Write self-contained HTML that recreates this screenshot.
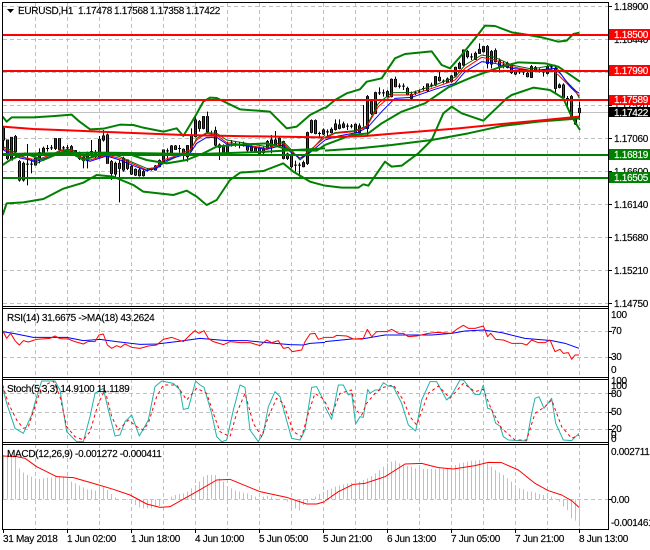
<!DOCTYPE html>
<html>
<head>
<meta charset="utf-8">
<style>
html,body{margin:0;padding:0;background:#fff;width:650px;height:550px;overflow:hidden}
svg{display:block}
text{font-family:"Liberation Sans",sans-serif;font-size:10px;letter-spacing:-.3px;fill:#000;stroke:#000;stroke-width:.15px}
text.w{fill:#fff;stroke:#fff}
polyline{vector-effect:non-scaling-stroke;fill:none;stroke-linejoin:round}
.b{stroke:#008000;stroke-width:2}
.g{stroke:#c0c0c0;stroke-width:1;stroke-dasharray:4 3;fill:none}
</style>
</head>
<body>
<svg width="650" height="550" viewBox="0 0 650 550" xmlns="http://www.w3.org/2000/svg">
<rect width="650" height="550" fill="#fff"/>
<!-- grid verticals -->
<path class="g" d="M35.5 3V306M67.5 3V306M99.5 3V306M131.5 3V306M163.5 3V306M195.5 3V306M227.5 3V306M259.5 3V306M291.5 3V306M323.5 3V306M355.5 3V306M387.5 3V306M419.5 3V306M451.5 3V306M483.5 3V306M515.5 3V306M547.5 3V306M579.5 3V306
M35.5 308V377M67.5 308V377M99.5 308V377M131.5 308V377M163.5 308V377M195.5 308V377M227.5 308V377M259.5 308V377M291.5 308V377M323.5 308V377M355.5 308V377M387.5 308V377M419.5 308V377M451.5 308V377M483.5 308V377M515.5 308V377M547.5 308V377M579.5 308V377
M35.5 379V442M67.5 379V442M99.5 379V442M131.5 379V442M163.5 379V442M195.5 379V442M227.5 379V442M259.5 379V442M291.5 379V442M323.5 379V442M355.5 379V442M387.5 379V442M419.5 379V442M451.5 379V442M483.5 379V442M515.5 379V442M547.5 379V442M579.5 379V442
M35.5 444V529M67.5 444V529M99.5 444V529M131.5 444V529M163.5 444V529M195.5 444V529M227.5 444V529M259.5 444V529M291.5 444V529M323.5 444V529M355.5 444V529M387.5 444V529M419.5 444V529M451.5 444V529M483.5 444V529M515.5 444V529M547.5 444V529M579.5 444V529"/>
<!-- grid horizontals -->
<path class="g" d="M3 6.5H608M3 39.5H608M3 72.5H608M3 105.5H608M3 138.5H608M3 171.5H608M3 204.5H608M3 237.5H608M3 270.5H608M3 303.5H608M3 331.5H608M3 357.5H608M3 393.5H608M3 412.5H608M3 429.5H608M3 499.5H608"/>
<path d="M3 112.5H608" stroke="#c0c0c0" stroke-width="1"/>

<!-- MACD histogram -->
<g transform="translate(0,300) scale(1,.33333)">
<path fill="none" stroke="#c0c0c0" stroke-width="1" d="M3.5 598V465M7.5 598V465M11.5 598V468M15.5 598V468M19.5 598V505M23.5 598V518M27.5 598V525M31.5 598V530M35.5 598V535M39.5 598V537M43.5 598V535M47.5 598V533M51.5 598V533M55.5 598V530M59.5 598V530M63.5 598V530M67.5 598V532M71.5 598V545M75.5 598V550M79.5 598V557M83.5 598V562M87.5 598V568M91.5 598V568M95.5 598V572M99.5 598V565M103.5 598V562M107.5 598V570M111.5 598V582M115.5 598V592M127.5 598V600M131.5 598V605M135.5 598V615M139.5 598V622M143.5 598V625M147.5 598V625M151.5 598V625M155.5 598V620M159.5 598V618M163.5 598V608M167.5 598V600M171.5 598V590M175.5 598V585M179.5 598V582M183.5 598V580M187.5 598V575M191.5 598V565M195.5 598V555M199.5 598V545M203.5 598V530M207.5 598V525M211.5 598V525M215.5 598V525M219.5 598V535M223.5 598V545M227.5 598V560M231.5 598V565M235.5 598V572M239.5 598V575M243.5 598V578M247.5 598V580M251.5 598V585M255.5 598V590M259.5 598V595M263.5 598V590M267.5 598V587M271.5 598V590M275.5 598V595M283.5 598V600M287.5 598V605M291.5 598V620M295.5 598V625M299.5 598V632M303.5 598V615M307.5 598V608M311.5 598V595M315.5 598V590M319.5 598V582M323.5 598V575M327.5 598V570M331.5 598V566M335.5 598V560M339.5 598V556M343.5 598V553M347.5 598V550M351.5 598V548M355.5 598V552M359.5 598V545M363.5 598V540M367.5 598V535M371.5 598V528M375.5 598V520M379.5 598V510M383.5 598V500M387.5 598V490M391.5 598V485M395.5 598V482M399.5 598V490M403.5 598V495M407.5 598V498M411.5 598V500M415.5 598V505M419.5 598V505M423.5 598V507M427.5 598V507M431.5 598V507M435.5 598V507M439.5 598V505M443.5 598V507M447.5 598V505M451.5 598V500M455.5 598V495M459.5 598V490M463.5 598V488M467.5 598V485M471.5 598V482M475.5 598V482M479.5 598V480M483.5 598V482M487.5 598V490M491.5 598V500M495.5 598V510M499.5 598V518M503.5 598V525M507.5 598V535M511.5 598V545M515.5 598V555M519.5 598V565M523.5 598V568M527.5 598V575M531.5 598V575M535.5 598V578M539.5 598V582M543.5 598V585M547.5 598V587M551.5 598V590M555.5 598V595M559.5 598V605M563.5 598V620M567.5 598V630M571.5 598V655M575.5 598V662M579.5 598V680"/>
</g>
<path d="M3 499.5H608" stroke="#c0c0c0" stroke-width="1" stroke-dasharray="4 3"/>

<!-- candles -->
<g transform="scale(1,.33333)" fill="none">
<path stroke="#000" stroke-width="1" d="M3.5 378V450M7.5 420V480M11.5 412V480M15.5 405V470M19.5 480V545M23.5 485V545M27.5 432V556M31.5 478V520M35.5 470V495M39.5 445V490M43.5 440V465M47.5 435V455M51.5 435V450M55.5 416V450M59.5 416V455M63.5 438V460M67.5 435V455M71.5 435V460M75.5 450V470M79.5 455V480M83.5 465V505M87.5 455V505M91.5 420V470M95.5 450V475M99.5 408V475M103.5 390V425M107.5 400V490M111.5 480V540M115.5 485V530M119.5 480V607M123.5 470V515M127.5 478V510M131.5 495V525M135.5 505V528M139.5 505V530M143.5 510V530M147.5 505V515M151.5 503V512M155.5 495V512M159.5 478V502M163.5 448V490M167.5 445V480M171.5 435V460M175.5 435V450M179.5 435V458M183.5 445V480M187.5 435V485M191.5 385V455M195.5 350V412M199.5 360V395M203.5 348V388M207.5 335V398M211.5 392V410M215.5 380V440M219.5 430V480M223.5 433V465M227.5 425V462M231.5 420V440M235.5 425V440M239.5 425V445M243.5 425V440M247.5 430V455M251.5 435V455M255.5 440V458M259.5 440V465M263.5 440V462M267.5 420V447M271.5 405V460M275.5 393V437M279.5 410V440M283.5 422V478M287.5 458V480M291.5 460V505M295.5 482V515M299.5 488V530M303.5 482V502M307.5 395V495M311.5 358V400M315.5 358V403M319.5 395V410M323.5 385V405M327.5 388V410M331.5 382V400M335.5 358V392M339.5 358V388M343.5 365V385M347.5 370V390M351.5 372V385M355.5 370V400M359.5 370V400M363.5 315V380M367.5 285V410M371.5 300V345M375.5 275V342M379.5 262V285M383.5 268V290M387.5 270V292M391.5 235V292M395.5 230V262M399.5 250V265M403.5 250V270M407.5 260V287M411.5 275V298M415.5 272V285M419.5 268V280M423.5 258V272M427.5 250V275M431.5 248V262M435.5 228V258M439.5 215V245M443.5 238V250M447.5 232V250M451.5 225V248M455.5 200V230M459.5 185V208M463.5 148V198M467.5 150V175M471.5 160V180M475.5 155V180M479.5 130V162M483.5 138V158M487.5 135V205M491.5 150V205M495.5 145V188M499.5 175V218M503.5 185V205M507.5 185V205M511.5 190V222M515.5 210V225M519.5 208V222M523.5 208V225M527.5 215V232M531.5 195V234M535.5 198V212M539.5 205V218M543.5 208V230M547.5 195V224M551.5 193V210M555.5 195V280M559.5 250V265M563.5 250V295M567.5 288V320M571.5 285V360M575.5 350V375M579.5 305V360"/>
<path stroke="#000" stroke-width="3" d="M27.5 491V494M31.5 491V494M47.5 444V447M51.5 442V445M63.5 442V445M67.5 442V445M147.5 509V512M151.5 507V510M167.5 451V454M179.5 444V447M231.5 427V430M235.5 431V434M239.5 431V434M243.5 431V434M295.5 494V497M299.5 494V497M319.5 399V402M327.5 394V397M347.5 377V380M351.5 377V380M379.5 277V280M383.5 277V280M399.5 257V260M403.5 257V260M415.5 277V280M419.5 274V277M423.5 264V267M431.5 254V257M443.5 242V245M471.5 169V172M503.5 194V197M519.5 214V217M523.5 214V217M539.5 209V212M543.5 214V217M551.5 199V202M567.5 294V297"/>
<path stroke="#000" stroke-width="3" stroke-linecap="square" d="M3.5 385V420M15.5 410V455M19.5 485V540M59.5 416V448M71.5 440V455M75.5 452V465M79.5 460V475M83.5 472V482M107.5 405V490M111.5 485V520M119.5 490V505M127.5 480V505M131.5 500V522M135.5 508V525M139.5 510V527M175.5 438V448M183.5 448V465M199.5 365V385M207.5 350V395M215.5 392V435M247.5 435V450M255.5 445V455M259.5 445V460M283.5 425V475M291.5 465V500M311.5 362V397M315.5 362V400M339.5 375V385M355.5 373V397M371.5 305V340M387.5 275V290M395.5 238V260M407.5 265V285M439.5 232V242M467.5 155V170M487.5 140V190M495.5 152V185M499.5 183V198M511.5 195V218M515.5 215V222M527.5 220V230M535.5 203V210M555.5 205V265M563.5 255V292M571.5 290V358M579.5 325V338"/>
<path stroke="#ff0000" stroke-width="1" d="M3.5 385V420M15.5 410V455M19.5 485V540M59.5 416V448M71.5 440V455M75.5 452V465M79.5 460V475M83.5 472V482M107.5 405V490M111.5 485V520M119.5 490V505M127.5 480V505M131.5 500V522M135.5 508V525M139.5 510V527M175.5 438V448M183.5 448V465M199.5 365V385M207.5 350V395M215.5 392V435M247.5 435V450M255.5 445V455M259.5 445V460M283.5 425V475M291.5 465V500M311.5 362V397M315.5 362V400M339.5 375V385M355.5 373V397M371.5 305V340M387.5 275V290M395.5 238V260M407.5 265V285M439.5 232V242M467.5 155V170M487.5 140V190M495.5 152V185M499.5 183V198M511.5 195V218M515.5 215V222M527.5 220V230M535.5 203V210M555.5 205V265M563.5 255V292M571.5 290V358M579.5 325V338"/>
<path stroke="#000" stroke-width="3" stroke-linecap="square" d="M7.5 420V475M11.5 412V480M23.5 490V540M35.5 475V495M39.5 458V480M43.5 445V460M55.5 416V445M87.5 460V482M91.5 455V465M95.5 460V470M99.5 418V470M103.5 408V420M115.5 490V522M123.5 475V510M143.5 515V527M155.5 498V510M159.5 482V500M163.5 450V485M171.5 438V458M187.5 437V470M191.5 408V450M195.5 360V410M203.5 350V385M219.5 435V442M223.5 438V460M227.5 435V460M251.5 440V452M263.5 447V458M267.5 425V445M271.5 420V440M275.5 420V435M279.5 415V435M287.5 462V475M303.5 488V500M307.5 398V490M323.5 390V402M331.5 388V398M335.5 372V388M343.5 372V382M359.5 378V398M367.5 290V385M375.5 278V340M391.5 238V290M411.5 283V295M427.5 252V272M435.5 230V255M447.5 237V247M451.5 228V245M455.5 202V228M459.5 190V205M463.5 150V195M475.5 160V178M479.5 148V160M483.5 140V155M491.5 155V192M507.5 190V202M531.5 200V232M547.5 200V220M559.5 255V262M575.5 355V372"/>
<path stroke="#006400" stroke-width="1" d="M7.5 420V475M11.5 412V480M23.5 490V540M35.5 475V495M39.5 458V480M43.5 445V460M55.5 416V445M87.5 460V482M91.5 455V465M95.5 460V470M99.5 418V470M103.5 408V420M115.5 490V522M123.5 475V510M143.5 515V527M155.5 498V510M159.5 482V500M163.5 450V485M171.5 438V458M187.5 437V470M191.5 408V450M195.5 360V410M203.5 350V385M219.5 435V442M223.5 438V460M227.5 435V460M251.5 440V452M263.5 447V458M267.5 425V445M271.5 420V440M275.5 420V435M279.5 415V435M287.5 462V475M303.5 488V500M307.5 398V490M323.5 390V402M331.5 388V398M335.5 372V388M343.5 372V382M359.5 378V398M367.5 290V385M375.5 278V340M391.5 238V290M411.5 283V295M427.5 252V272M435.5 230V255M447.5 237V247M451.5 228V245M455.5 202V228M459.5 190V205M463.5 150V195M475.5 160V178M479.5 148V160M483.5 140V155M491.5 155V192M507.5 190V202M531.5 200V232M547.5 200V220M559.5 255V262M575.5 355V372"/>
</g>

<!-- thin MAs and Bollinger left half -->
<g transform="scale(.33333)">
<polyline stroke="#006400" stroke-width="1" points="10,440 60,465 110,490 150,470 180,450 215,448 240,465 270,475 320,460 360,470 400,488 440,505 470,505 490,490 520,475 570,455 590,415 620,398 650,400 680,420 740,430 800,440 850,425 870,445 900,480 925,460 975,405"/>
<polyline stroke="#ff0000" stroke-width="1" points="10,445 60,470 110,480 150,465 180,452 215,452 240,470 270,480 320,465 360,475 400,492 440,510 470,500 490,480 520,470 570,450 590,420 620,400 650,405 680,428 740,435 800,445 850,430 870,450 900,475 925,455 975,412"/>
<polyline stroke="#0000ff" stroke-width="1" points="10,450 60,474 110,484 150,469 180,456 215,455 240,474 270,484 320,468 360,480 400,497 440,512 470,505 490,485 520,473 570,460 590,430 620,412 650,412 680,432 740,438 800,448 850,435 870,455 900,475 925,462 975,420"/>
<polyline class="b" points="8,350 20,365 35,352 100,352 165,348 215,344 235,362 270,388 310,386 360,374 400,375 430,383 490,395 530,385 550,408 585,350 610,305 630,293 650,294 720,328 810,335 860,385 890,380 930,345 975,322"/>
<polyline class="b" points="8,645 20,610 70,607 130,597 190,566 250,548 290,525 340,530 400,555 430,575 520,585 560,572 590,590 620,615 650,600 690,540 720,518 790,513 850,490 880,515 930,545 975,557"/>
<polyline class="b" points="8,495 30,480 75,460 130,480 200,450 250,480 310,460 380,460 440,480 500,490 560,480 610,460 650,440 700,435 800,430 870,450 950,452 975,435"/>
<polyline class="b" points="8,462 300,458 600,462 800,455 975,445"/>
<polyline stroke="#ff0000" stroke-width="2" points="8,380 100,387 225,392 370,398 550,405 700,408 970,412"/>
</g>
<!-- right half -->
<g transform="translate(325,0) scale(.33333)">
<polyline stroke="#006400" stroke-width="1" points="0,412 30,398 90,392 125,378 160,310 200,278 260,278 330,255 390,232 420,195 470,165 510,172 560,195 620,207 690,195 720,240 750,270 763,295"/>
<polyline stroke="#ff0000" stroke-width="1" points="0,415 30,400 90,395 125,380 160,320 200,285 260,285 330,262 390,240 420,205 470,172 510,180 560,200 620,212 680,208 700,225 730,255 763,288"/>
<polyline stroke="#0000ff" stroke-width="1" points="0,420 40,408 100,397 130,380 170,335 210,295 260,292 330,268 390,250 420,215 470,185 510,190 560,205 620,212 690,205 710,225 740,265 763,280"/>
<polyline class="b" points="0,325 30,300 65,280 105,268 125,245 170,235 210,175 240,162 320,154 350,195 375,205 410,165 450,115 480,77 510,78 560,97 600,103 650,112 700,125 725,122 745,102 763,98"/>
<polyline class="b" points="0,557 50,563 100,563 115,553 130,557 180,485 200,500 230,497 280,460 320,420 355,340 380,320 410,340 475,362 545,295 560,285 625,263 675,270 715,295 740,350 765,390"/>
<polyline class="b" points="0,435 80,405 130,400 170,370 230,335 300,310 370,262 440,232 520,203 580,187 660,190 700,200 765,245"/>
<polyline class="b" points="0,452 100,445 200,435 320,420 430,400 530,378 640,365 765,355"/>
<polyline stroke="#ff0000" stroke-width="2" points="0,412 120,408 250,397 400,385 530,372 640,362 763,350"/>
</g>

<!-- horizontal lines -->
<rect x="3" y="34" width="605" height="2" fill="#ff0000"/>
<rect x="3" y="70" width="605" height="2" fill="#ff0000"/>
<rect x="3" y="99" width="605" height="2" fill="#ff0000"/>
<rect x="3" y="154" width="605" height="2" fill="#008000"/>
<rect x="3" y="177" width="605" height="2" fill="#008000"/>

<!-- RSI -->
<g transform="translate(0,300) scale(.33333)">
<polyline stroke="#0000ff" stroke-width="1" points="8,95 40,100 100,112 200,112 250,122 300,118 350,125 420,133 470,132 530,125 600,115 680,122 740,122 800,128 870,134 910,135 930,130 975,127"/>
<polyline stroke="#ff0000" stroke-width="1" points="8,92 20,115 32,100 45,122 58,135 70,122 85,126 110,118 150,115 165,108 180,116 205,117 225,125 250,132 265,124 285,125 297,105 310,102 322,135 335,145 350,137 362,142 375,132 395,142 420,145 445,138 470,135 490,118 515,112 550,125 570,105 585,92 597,100 612,92 625,115 640,125 670,134 690,125 720,128 750,128 780,137 800,120 815,128 835,122 850,145 865,142 877,155 905,150 915,125 930,102 945,100 955,118 975,112"/>
<polyline stroke="#20b2aa" stroke-width="1" points="8,262 20,310 45,385 70,400 95,345 110,290 125,243 165,243 180,270 200,395 230,425 250,425 270,350 285,280 310,265 325,330 345,408 360,405 375,365 395,345 418,408 445,360 465,260 485,243 520,250 540,270 550,328 565,325 587,243 600,255 612,262 635,340 650,410 665,425 680,420 700,330 720,255 735,262 750,390 775,425 790,400 805,320 825,275 840,290 875,415 900,420 915,390 935,262 950,260 975,310"/>
<polyline stroke="#ff0000" stroke-width="1" stroke-dasharray="3 3" points="8,255 25,310 50,360 70,385 85,380 105,320 125,260 160,243 180,290 200,380 225,410 250,420 270,395 295,310 315,270 335,350 355,390 385,360 410,380 430,390 445,370 470,290 490,255 530,255 560,300 590,265 620,280 640,340 660,395 690,410 710,340 735,280 760,370 785,410 805,350 830,295 850,310 880,395 905,410 925,340 945,280 975,300"/>
<polyline stroke="#ff0000" stroke-width="1" points="8,468 50,470 75,475 110,500 170,530 220,533 280,550 340,568 390,585 440,612 480,622 510,620 590,575 650,540 690,538 780,575 860,592 920,612 950,612 975,605"/>
</g>
<g transform="translate(325,300) scale(.33333)">
<polyline stroke="#0000ff" stroke-width="1" points="0,125 80,117 110,117 180,105 250,105 320,105 380,100 420,93 475,90 530,98 600,115 680,122 720,130 762,145"/>
<polyline stroke="#ff0000" stroke-width="1" points="0,112 25,112 35,106 65,108 85,117 115,115 127,88 140,110 155,95 185,95 200,88 220,100 235,100 250,110 275,108 310,100 335,97 380,100 395,88 415,76 430,85 450,85 475,78 488,110 497,100 512,118 535,120 560,130 590,130 605,135 620,120 640,128 660,128 675,120 690,155 705,148 715,160 730,158 740,178 750,165 762,165"/>
<polyline stroke="#20b2aa" stroke-width="1" points="0,320 20,358 40,255 55,255 70,285 80,280 92,372 105,350 115,352 128,268 135,280 150,270 162,270 175,248 190,258 205,260 230,310 250,375 272,393 290,300 315,245 335,245 365,300 380,285 405,240 415,240 450,283 465,283 475,255 488,325 500,328 512,370 525,378 535,410 550,420 605,423 620,340 630,295 642,290 657,325 665,315 680,295 692,370 715,420 740,422 762,400"/>
<polyline stroke="#ff0000" stroke-width="1" stroke-dasharray="3 3" points="0,305 20,345 45,280 80,270 92,330 110,345 125,310 150,280 175,262 205,255 235,300 255,350 275,375 310,280 340,258 375,295 415,250 450,275 475,268 500,330 530,385 570,420 605,420 630,340 660,320 680,300 710,380 740,415 762,405"/>
<polyline stroke="#ff0000" stroke-width="1" points="0,603 40,575 85,553 120,550 180,530 240,492 290,490 340,503 385,507 450,497 490,487 530,488 580,510 630,550 670,572 710,585 740,602 762,622"/>
</g>

<!-- frames -->
<g fill="none" stroke="#000" stroke-width="1">
<path d="M2.5 2.5H608.5V529.5H2.5Z"/>
<path d="M2.5 306.5H608.5M2.5 308.5H608.5M2.5 377.5H608.5M2.5 379.5H608.5M2.5 442.5H608.5M2.5 444.5H608.5"/>
<path d="M3.5 529V533M67.5 529V533M131.5 529V533M195.5 529V533M259.5 529V533M323.5 529V533M387.5 529V533M451.5 529V533M515.5 529V533M579.5 529V533"/>
<path d="M608 6.5h4M608 39.5h4M608 72.5h4M608 105.5h4M608 138.5h4M608 171.5h4M608 204.5h4M608 237.5h4M608 270.5h4M608 303.5h4M608 331.5h4M608 357.5h4M608 393.5h4M608 412.5h4M608 429.5h4M608 499.5h4"/>
</g>

<!-- title -->
<path d="M7 9h7l-3.5 4z" fill="#000"/>
<text x="18" y="14">EURUSD,H1</text>
<text x="78" y="14">1.17478</text>
<text x="114" y="14">1.17568</text>
<text x="150" y="14">1.17358</text>
<text x="186" y="14">1.17422</text>
<text x="7" y="321">RSI(14) 31.6675  -&gt;MA(18) 43.2624</text>
<text x="7" y="392">Stoch(5,3,3) 14.9100 11.1189</text>
<text x="7" y="457">MACD(12,26,9) -0.001272 -0.000411</text>

<!-- right axis -->
<text x="614" y="10">1.18900</text>
<text x="614" y="43">1.18440</text>
<text x="614" y="109">1.17520</text>
<text x="614" y="142">1.17060</text>
<text x="614" y="175">1.16600</text>
<text x="614" y="208">1.16140</text>
<text x="614" y="241">1.15680</text>
<text x="614" y="274">1.15210</text>
<text x="614" y="307">1.14750</text>
<text x="611" y="318">100</text>
<text x="611" y="334">70</text>
<text x="611" y="360">30</text>
<text x="611" y="373">0</text>
<text x="611" y="384">100</text>
<text x="611" y="389">100</text>
<text x="611" y="397">80</text>
<text x="611" y="415">50</text>
<text x="611" y="432">20</text>
<text x="611" y="438">0</text>
<text x="611" y="442">0</text>
<text x="611" y="455">0.002711</text>
<text x="611" y="503">0.00</text>
<text x="611" y="526">-0.001461</text>

<rect x="609" y="29" width="41" height="11" fill="#ff0000"/>
<text class="w" x="614" y="38">1.18500</text>
<rect x="609" y="65" width="41" height="11" fill="#ff0000"/>
<text class="w" x="614" y="74">1.17990</text>
<rect x="609" y="95" width="41" height="10" fill="#ff0000"/>
<text class="w" x="614" y="103">1.17589</text>
<rect x="609" y="107" width="41" height="10" fill="#000"/>
<text class="w" x="614" y="116">1.17422</text>
<rect x="609" y="149" width="41" height="11" fill="#008000"/>
<text class="w" x="614" y="158">1.16819</text>
<rect x="609" y="172" width="41" height="11" fill="#008000"/>
<text class="w" x="614" y="181">1.16505</text>

<!-- time axis -->
<text x="3" y="542">31 May 2018</text>
<text x="67" y="542">1 Jun 02:00</text>
<text x="131" y="542">1 Jun 18:00</text>
<text x="195" y="542">4 Jun 10:00</text>
<text x="259" y="542">5 Jun 05:00</text>
<text x="323" y="542">5 Jun 21:00</text>
<text x="387" y="542">6 Jun 13:00</text>
<text x="451" y="542">7 Jun 05:00</text>
<text x="515" y="542">7 Jun 21:00</text>
<text x="579" y="542">8 Jun 13:00</text>
</svg>
</body>
</html>
